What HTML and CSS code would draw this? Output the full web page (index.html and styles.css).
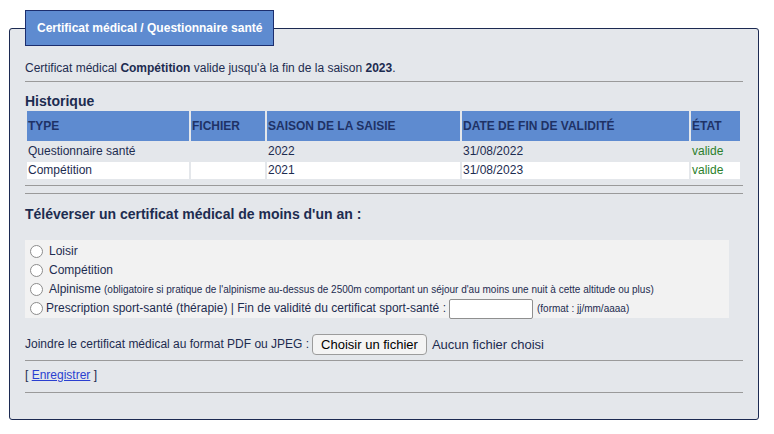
FILE: index.html
```html
<!DOCTYPE html>
<html lang="fr">
<head>
<meta charset="utf-8">
<title>Certificat médical</title>
<link rel="stylesheet" href="styles.css">
</head>
<body>
<fieldset class="card">
  <legend class="card-title">Certificat médical / Questionnaire santé</legend>
  <p class="status">Certificat médical <b>Compétition</b> valide jusqu'à la fin de la saison <b>2023</b>.</p>
  <hr class="rule rule-a">
  <h3 class="section-title hist-title">Historique</h3>
  <table class="history">
    <colgroup>
      <col class="c-type"><col class="c-file"><col class="c-season"><col class="c-date"><col class="c-state">
    </colgroup>
    <thead>
      <tr><th>TYPE</th><th>FICHIER</th><th>SAISON DE LA SAISIE</th><th>DATE DE FIN DE VALIDITÉ</th><th>ÉTAT</th></tr>
    </thead>
    <tbody>
      <tr class="row-plain"><td>Questionnaire santé</td><td></td><td>2022</td><td>31/08/2022</td><td class="ok">valide</td></tr>
      <tr class="row-white"><td>Compétition</td><td></td><td>2021</td><td>31/08/2023</td><td class="ok">valide</td></tr>
    </tbody>
  </table>
  <hr class="rule rule-b">
  <hr class="rule rule-c">
  <h3 class="section-title up-title">Téléverser un certificat médical de moins d'un an :</h3>
  <div class="options">
    <label class="opt"><input type="radio" name="t" class="radio"><span class="gap">Loisir</span></label>
    <label class="opt"><input type="radio" name="t" class="radio"><span class="gap">Compétition</span></label>
    <label class="opt"><input type="radio" name="t" class="radio"><span class="gap">Alpinisme</span><span class="small">(obligatoire si pratique de l'alpinisme au-dessus de 2500m comportant un séjour d'au moins une nuit à cette altitude ou plus)</span></label>
    <div class="opt opt-last"><input type="radio" name="t" class="radio"><span>Prescription sport-santé (thérapie) | Fin de validité du certificat sport-santé :</span><input type="text" class="date-input"><span class="small">(format : jj/mm/aaaa)</span></div>
  </div>
  <div class="attach">
    <span>Joindre le certificat médical au format PDF ou JPEG :</span>
    <button type="button" class="file-btn">Choisir un fichier</button>
    <span class="file-name">Aucun fichier choisi</span>
  </div>
  <hr class="rule rule-d">
  <div class="save">[ <a href="#" class="save-link">Enregistrer</a> ]</div>
  <hr class="rule rule-e">
</fieldset>
</body>
</html>
```

FILE: styles.css
```css
html, body {
  background: #ffffff;
}
body {
  margin: 0;
  padding: 10px 0 0 9px;
  font-family: "Liberation Sans", Arial, sans-serif;
  font-size: 12px;
  line-height: 15px;
  color: #1d2c50;
}
.card {
  width: 750px;
  box-sizing: border-box;
  margin: 0;
  min-width: 0;
  border: 1px solid #1c2a52;
  border-radius: 3px;
  background: #e4e7eb;
  padding: 0 15px 26px 15px;
}
.card-title {
  margin: 0;
  padding: 10px 11px;
  line-height: 14px;
  font-weight: bold;
  font-size: 12px;
  color: #ffffff;
  background: #5e8bd0;
  border: 1px solid #1c2e6e;
}
.status {
  margin: 15px 0 0;
}
.status b {
  font-weight: bold;
}
.rule {
  border: 0;
  border-top: 1px solid #9a9a9a;
  height: 0;
  margin: 0;
}
.rule-a { margin-top: 5px; }
.rule-b { margin-top: 4px; }
.rule-c { margin-top: 7px; }
.rule-d { margin-top: 5px; }
.rule-e { margin-top: 9px; }
.section-title {
  margin: 0;
  font-size: 14px;
  line-height: 16px;
  font-weight: bold;
  color: #1d2c50;
}
.hist-title { margin-top: 11px; }
.up-title { margin-top: 12px; }
.history {
  width: 717px;
  table-layout: fixed;
  border-collapse: separate;
  border-spacing: 2px;
  margin-left: 0;
}
.c-type { width: 162px; }
.c-file { width: 74px; }
.c-season { width: 193px; }
.c-date { width: 227px; }
.c-state { width: 49px; }
.history th {
  background: #5e8bd0;
  color: #1e3266;
  font-weight: bold;
  text-align: left;
  height: 30px;
  padding: 0 1px;
  box-sizing: border-box;
  vertical-align: middle;
}
.history td {
  height: 17px;
  box-sizing: border-box;
  padding: 0 1px;
  line-height: 15px;
  vertical-align: middle;
  white-space: nowrap;
}
.row-white td {
  background: #ffffff;
}
.ok {
  color: #2b7f2b;
}
.options {
  margin-top: 18px;
  width: 704px;
  background: #f2f2f2;
  padding-top: 2px;
}
.opt {
  display: flex;
  align-items: center;
  height: 19px;
  white-space: nowrap;
}
.gap {
  margin-left: 3px;
  margin-right: 3px;
}
.radio {
  appearance: none;
  -webkit-appearance: none;
  width: 13px;
  height: 13px;
  box-sizing: border-box;
  border: 1px solid #8c8c8c;
  border-radius: 50%;
  background: #ffffff;
  margin: 0 3px 0 5px;
  flex: none;
}
.small {
  font-size: 10px;
}
.date-input {
  appearance: none;
  -webkit-appearance: none;
  width: 84px;
  height: 20px;
  box-sizing: border-box;
  border: 1px solid #8f8f8f;
  border-radius: 2px;
  background: #ffffff;
  margin: 0 4px 0 3px;
  padding: 0 3px;
  flex: none;
}
.attach {
  margin-top: 15px;
  height: 22px;
  display: flex;
  align-items: center;
}
.file-btn {
  margin-left: 3px;
  height: 21px;
  padding: 0 8px;
  font-family: "Liberation Sans", Arial, sans-serif;
  font-size: 13px;
  color: #000000;
  background: #f4f4f4;
  border: 1px solid #9c9c9c;
  border-radius: 4px;
}
.file-name {
  margin-left: 5px;
  font-size: 13px;
}
.save {
  margin-top: 7px;
}
.save-link {
  color: #2a3fd0;
  text-decoration: underline;
}
```
